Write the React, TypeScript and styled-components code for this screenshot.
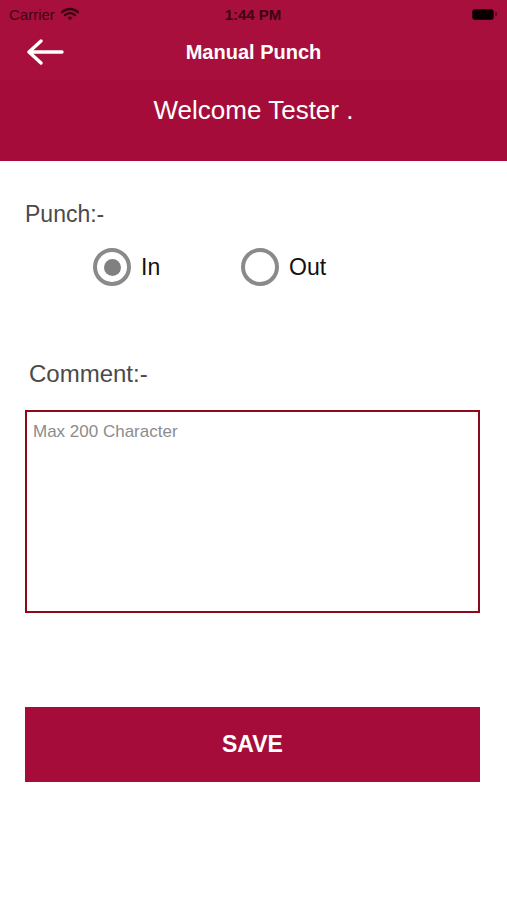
import React, { useState } from 'react';
import styled, { createGlobalStyle } from 'styled-components';

const BRAND = '#a60c39';
const BRAND_TOP = '#a80f3c';
const BORDER = '#8a0a1d';

const GlobalStyle = createGlobalStyle`
  html, body {
    margin: 0;
    padding: 0;
    background: #ffffff;
    font-family: 'Liberation Sans', Arial, sans-serif;
  }
  * {
    box-sizing: border-box;
  }
`;

const Screen = styled.div`
  width: 507px;
  height: 900px;
  display: flex;
  flex-direction: column;
  background: #ffffff;
  overflow: hidden;
`;

const Header = styled.header`
  display: flex;
  flex-direction: column;
  background: linear-gradient(${BRAND_TOP} 0, ${BRAND_TOP} 80px, ${BRAND} 80px);
  height: 161px;
`;

const StatusBar = styled.div`
  display: grid;
  grid-template-columns: 1fr auto 1fr;
  align-items: center;
  height: 28px;
  padding: 0 10px 0 9px;
  color: #3d0414;
  font-size: 15px;
`;

const Carrier = styled.div`
  display: flex;
  align-items: center;
  gap: 6px;
`;

const Clock = styled.div`
  font-weight: bold;
  font-size: 15px;
`;

const Battery = styled.div`
  justify-self: end;
  display: flex;
  align-items: center;
  gap: 1px;
`;

const BatteryBody = styled.div`
  width: 22px;
  height: 11px;
  border-radius: 3px;
  background: #0a0003;
  border: 1px solid #2a0410;
`;

const BatteryTip = styled.div`
  width: 2px;
  height: 4px;
  border-radius: 0 1px 1px 0;
  background: #5a0a20;
`;

const NavBar = styled.div`
  position: relative;
  display: flex;
  align-items: center;
  justify-content: center;
  height: 48px;
`;

const BackButton = styled.button`
  position: absolute;
  left: 26px;
  top: 50%;
  transform: translateY(-50%);
  display: flex;
  padding: 0;
  border: 0;
  background: none;
  cursor: pointer;
`;

const NavTitle = styled.h1`
  margin: 0;
  color: #ffffff;
  font-size: 20px;
  font-weight: bold;
`;

const Welcome = styled.div`
  flex: 1;
  display: flex;
  align-items: center;
  justify-content: center;
  padding-bottom: 16px;
  color: #ffffff;
  font-size: 26px;
`;

const Body = styled.main`
  display: flex;
  flex-direction: column;
  padding: 0 27px 0 25px;
`;

const Label = styled.div<{ $indent?: number; $size?: number }>`
  padding-left: ${(p) => p.$indent ?? 0}px;
  color: #4a4a4a;
  font-size: ${(p) => p.$size ?? 20}px;
`;

const PunchSection = styled.section`
  display: flex;
  flex-direction: column;
  padding-top: 40px;
  gap: 20px;
`;

const RadioRow = styled.div`
  display: flex;
  align-items: center;
  padding-left: 68px;
`;

const RadioOption = styled.label`
  display: flex;
  align-items: center;
  gap: 10px;
  width: 148px;
  color: #111111;
  font-size: 23px;
  cursor: pointer;
`;

const RadioCircle = styled.span<{ $checked: boolean }>`
  width: 38px;
  height: 38px;
  border-radius: 50%;
  border: 4px solid #8a8a8a;
  display: flex;
  align-items: center;
  justify-content: center;

  &::after {
    content: '';
    width: 17px;
    height: 17px;
    border-radius: 50%;
    background: ${(p) => (p.$checked ? '#808080' : 'transparent')};
  }
`;

const CommentSection = styled.section`
  display: flex;
  flex-direction: column;
  padding-top: 74px;
  gap: 22px;
`;

const CommentBox = styled.textarea`
  width: 455px;
  height: 203px;
  margin: 0;
  padding: 10px 6px;
  border: 2px solid ${BORDER};
  border-radius: 0;
  resize: none;
  outline: none;
  font-family: 'Liberation Sans', Arial, sans-serif;
  font-size: 17px;
  color: #333333;

  &::placeholder {
    color: #8c8c8c;
  }
`;

const SaveButton = styled.button`
  margin-top: 94px;
  width: 455px;
  height: 75px;
  border: 0;
  background: ${BRAND};
  color: #ffffff;
  font-family: 'Liberation Sans', Arial, sans-serif;
  font-size: 23px;
  font-weight: bold;
  cursor: pointer;
`;

function WifiIcon() {
  return (
    <svg width="18" height="14" viewBox="0 0 18 14">
      <path d="M1 5.2 A11.5 11.5 0 0 1 17 5.2" fill="none" stroke="#3d0414" strokeWidth="2.4" strokeLinecap="round" />
      <path d="M4 8.2 A7 7 0 0 1 14 8.2" fill="none" stroke="#3d0414" strokeWidth="2.4" strokeLinecap="round" />
      <path d="M6.6 10.8 L9 13.3 L11.4 10.8 A3.4 3.4 0 0 0 6.6 10.8 Z" fill="#3d0414" />
    </svg>
  );
}

function BackArrow() {
  return (
    <svg width="38" height="26" viewBox="0 0 38 26">
      <path d="M36 13 H4 M15 2 L3 13 L15 24" fill="none" stroke="#ffffff" strokeWidth="3.4" strokeLinecap="round" strokeLinejoin="round" />
    </svg>
  );
}

export default function App() {
  const [punch, setPunch] = useState<'in' | 'out'>('in');
  const [comment, setComment] = useState('');

  return (
    <Screen>
      <GlobalStyle />
      <Header>
        <StatusBar>
          <Carrier>
            Carrier
            <WifiIcon />
          </Carrier>
          <Clock>1:44 PM</Clock>
          <Battery>
            <BatteryBody />
            <BatteryTip />
          </Battery>
        </StatusBar>
        <NavBar>
          <BackButton aria-label="Back">
            <BackArrow />
          </BackButton>
          <NavTitle>Manual Punch</NavTitle>
        </NavBar>
        <Welcome>Welcome Tester .</Welcome>
      </Header>
      <Body>
        <PunchSection>
          <Label $size={23}>Punch:-</Label>
          <RadioRow>
            <RadioOption onClick={() => setPunch('in')}>
              <RadioCircle $checked={punch === 'in'} />
              In
            </RadioOption>
            <RadioOption onClick={() => setPunch('out')}>
              <RadioCircle $checked={punch === 'out'} />
              Out
            </RadioOption>
          </RadioRow>
        </PunchSection>
        <CommentSection>
          <Label $indent={4} $size={24}>Comment:-</Label>
          <CommentBox
            placeholder="Max 200 Character"
            maxLength={200}
            value={comment}
            onChange={(e) => setComment(e.target.value)}
          />
        </CommentSection>
        <SaveButton>SAVE</SaveButton>
      </Body>
    </Screen>
  );
}
